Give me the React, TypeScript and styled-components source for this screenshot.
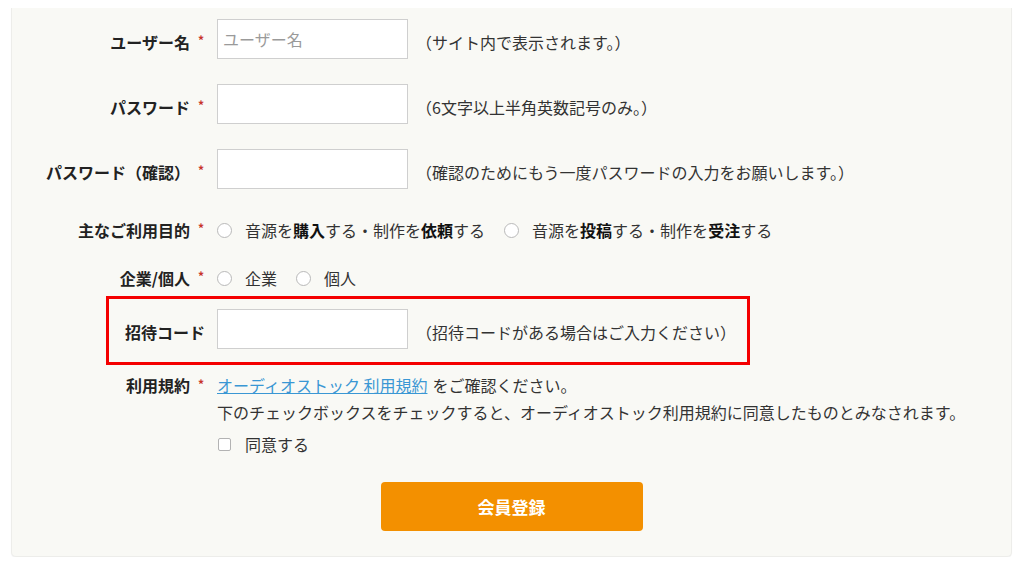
import React from "react";
import styled, {createGlobalStyle} from "styled-components";

const GlobalStyle = createGlobalStyle`
    html, body {
        margin: 0;
        padding: 0;
        background: #ffffff;
    }
    body {
        font-family: "Noto Sans CJK JP", "Noto Sans", sans-serif;
        color: #222;
    }
`;

const Panel = styled.form`
    box-sizing: border-box;
    width: 1001px;
    margin: 8px 0 0 11px;
    padding: 11px 0 25px 0;
    background: #f9f9f5;
    border: 1px solid #ededea;
    border-top: none;
    border-radius: 0 0 5px 5px;
    box-shadow: 0 1px 1px rgba(0, 0, 0, 0.05);
    display: flex;
    flex-direction: column;
`;

const LabelCell = styled.div<{ $lineHeight?: number }>`
    display: flex;
    justify-content: flex-end;
    align-items: center;
    font-size: 16px;
    font-weight: bold;
    color: #222;
    line-height: ${p => p.$lineHeight ?? 24}px;
    white-space: nowrap;
`;

const Note = styled.span`
    margin-left: 8px;
    font-size: 16px;
    color: #333;
`;

const Row = styled.div<{ $height: number; $top: number; $labelWidth?: number; $align?: string; $textDrop?: number }>`
    display: grid;
    grid-template-columns: ${p => p.$labelWidth ?? 193}px 1fr;
    column-gap: 12px;
    align-items: ${p => p.$align ?? 'center'};
    min-height: ${p => p.$height}px;
    margin-top: ${p => p.$top}px;
    ${LabelCell}, ${Note} {
        padding-top: ${p => p.$textDrop ?? 0}px;
    }
`;

const Highlight = styled.div`
    box-sizing: border-box;
    width: 644px;
    margin: 6px 0 0 94px;
    padding: 10px 0 13px 0;
    border: 3px solid #f40000;
`;

const Required = styled.span`
    display: inline-block;
    box-sizing: border-box;
    width: 15px;
    padding-right: 1px;
    text-align: right;
    color: #c8342a;
    font-size: 12px;
    font-weight: bold;
    position: relative;
    top: -2px;
`;

const Field = styled.div`
    display: flex;
    align-items: center;
    font-size: 16px;
    color: #333;
    white-space: nowrap;
`;

const TextInput = styled.input`
    box-sizing: border-box;
    width: 191px;
    height: 40px;
    padding: 0 5px;
    border: 1px solid #cfcfcf;
    background: #fff;
    font-family: inherit;
    font-size: 16px;
    color: #333;
    outline: none;
    &::placeholder {
        color: #9a9a9a;
    }
`;

const Radio = styled.input.attrs({type: 'radio'})`
    appearance: none;
    box-sizing: border-box;
    width: 15px;
    height: 15px;
    margin: 0 13px 0 0;
    border: 1px solid #b9b9b9;
    border-radius: 50%;
    background: #fff;
`;

const Choice = styled.label`
    display: flex;
    align-items: center;
    margin-right: 19px;
    font-size: 16px;
    color: #333;
    b {
        color: #111;
    }
`;

const Terms = styled.div`
    display: flex;
    flex-direction: column;
    font-size: 16px;
    line-height: 27px;
    color: #333;
`;

const TermsLink = styled.a`
    color: #3a97d4;
    text-decoration: underline;
    margin-right: 5px;
`;

const Check = styled.input.attrs({type: 'checkbox'})`
    appearance: none;
    box-sizing: border-box;
    width: 13px;
    height: 13px;
    margin: 0 14px 0 1px;
    border: 1px solid #b3b3b3;
    border-radius: 2px;
    background: #fff;
`;

const CheckRow = styled.label`
    display: flex;
    align-items: center;
    height: 24px;
    margin-top: 6px;
`;

const Actions = styled.div`
    display: flex;
    justify-content: center;
    margin-top: 26px;
`;

const SubmitButton = styled.button`
    width: 262px;
    height: 49px;
    border: none;
    border-radius: 4px;
    background: #f39000;
    color: #fff;
    font-family: inherit;
    font-size: 17px;
    font-weight: bold;
    cursor: pointer;
`;

function Label(props: { text: string; required?: boolean; lineHeight?: number }) {
    return (
        <LabelCell $lineHeight={props.lineHeight}>
            {props.text}
            {props.required ? <Required>*</Required> : null}
        </LabelCell>
    )
}

export default function App() {
    return (
        <>
            <GlobalStyle/>
            <Panel onSubmit={e => e.preventDefault()}>
                <Row $height={40} $top={0} $textDrop={6}>
                    <Label text="ユーザー名" required/>
                    <Field>
                        <TextInput placeholder="ユーザー名"/>
                        <Note>（サイト内で表示されます。）</Note>
                    </Field>
                </Row>
                <Row $height={40} $top={25} $textDrop={6}>
                    <Label text="パスワード" required/>
                    <Field>
                        <TextInput type="password"/>
                        <Note>（6文字以上半角英数記号のみ。）</Note>
                    </Field>
                </Row>
                <Row $height={40} $top={25} $textDrop={6}>
                    <Label text="パスワード（確認）" required/>
                    <Field>
                        <TextInput type="password"/>
                        <Note>（確認のためにもう一度パスワードの入力をお願いします。）</Note>
                    </Field>
                </Row>
                <Row $height={24} $top={29}>
                    <Label text="主なご利用目的" required/>
                    <Field>
                        <Choice><Radio name="purpose"/>音源を<b>購入</b>する・制作を<b>依頼</b>する</Choice>
                        <Choice><Radio name="purpose"/>音源を<b>投稿</b>する・制作を<b>受注</b>する</Choice>
                    </Field>
                </Row>
                <Row $height={24} $top={24}>
                    <Label text="企業/個人" required/>
                    <Field>
                        <Choice><Radio name="type"/>企業</Choice>
                        <Choice><Radio name="type"/>個人</Choice>
                    </Field>
                </Row>
                <Highlight>
                    <Row $height={40} $top={0} $labelWidth={96} $textDrop={6}>
                        <Label text="招待コード"/>
                        <Field>
                            <TextInput/>
                            <Note>（招待コードがある場合はご入力ください）</Note>
                        </Field>
                    </Row>
                </Highlight>
                <Row $height={84} $top={7} $align="start">
                    <Label text="利用規約" required lineHeight={27}/>
                    <Terms>
                        <span><TermsLink href="#">オーディオストック 利用規約</TermsLink>をご確認ください。</span>
                        <span>下のチェックボックスをチェックすると、オーディオストック利用規約に同意したものとみなされます。</span>
                        <CheckRow><Check/>同意する</CheckRow>
                    </Terms>
                </Row>
                <Actions>
                    <SubmitButton type="submit">会員登録</SubmitButton>
                </Actions>
            </Panel>
        </>
    )
}
